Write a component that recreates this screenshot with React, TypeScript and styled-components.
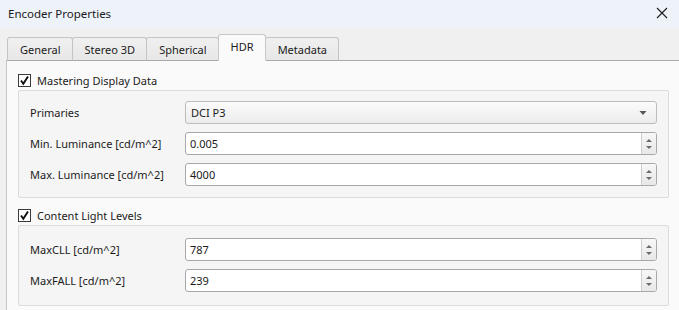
import styled, { createGlobalStyle } from "styled-components";

const GlobalStyle = createGlobalStyle`
  html, body {
    margin: 0;
    padding: 0;
    background: #fafafa;
  }
  body {
    font-family: "Noto Sans", "Segoe UI", sans-serif;
    font-size: 11px;
    color: #1b1b1b;
  }
`;

const tabs = ["General", "Stereo 3D", "Spherical", "HDR", "Metadata"];

export default function App() {
  return (
    <Window>
      <GlobalStyle />
      <TitleBar>
        <Title>Encoder Properties</Title>
        <CloseButton>
          <svg width="12" height="12" viewBox="0 0 12 12">
            <path d="M1 1 L11 11 M11 1 L1 11" stroke="#1b1b1b" strokeWidth="1.1" />
          </svg>
        </CloseButton>
      </TitleBar>
      <TabBar>
        {tabs.map((t) => (
          <Tab key={t} $active={t === "HDR"}>
            {t}
          </Tab>
        ))}
        <TabFill />
      </TabBar>
      <Panel>
        <CheckRow>
          <CheckBox />
          <span>Mastering Display Data</span>
        </CheckRow>
        <Group>
          <FieldRow>
            <Label>Primaries</Label>
            <Combo>
              <span>DCI P3</span>
              <DownArrow />
            </Combo>
          </FieldRow>
          <FieldRow>
            <Label>Min. Luminance [cd/m^2]</Label>
            <SpinBox value="0.005" />
          </FieldRow>
          <FieldRow>
            <Label>Max. Luminance [cd/m^2]</Label>
            <SpinBox value="4000" />
          </FieldRow>
        </Group>
        <CheckRow $second>
          <CheckBox />
          <span>Content Light Levels</span>
        </CheckRow>
        <Group $loose>
          <FieldRow>
            <Label>MaxCLL [cd/m^2]</Label>
            <SpinBox value="787" />
          </FieldRow>
          <FieldRow>
            <Label>MaxFALL [cd/m^2]</Label>
            <SpinBox value="239" />
          </FieldRow>
        </Group>
      </Panel>
    </Window>
  );
}

function CheckBox() {
  return (
    <Box>
      <svg width="11" height="11" viewBox="0 0 11 11">
        <path d="M2 5.5 L4.3 8.7 L9 1.5" stroke="#111" strokeWidth="1.9" fill="none" />
      </svg>
    </Box>
  );
}

function SpinBox({ value }: { value: string }) {
  return (
    <Spin>
      <SpinText>{value}</SpinText>
      <SpinButtons>
        <svg width="8" height="14" viewBox="0 0 8 14">
          <path d="M1 5 L4 2 L7 5 Z" fill="#6a6a6a" />
          <path d="M1 9 L4 12 L7 9 Z" fill="#6a6a6a" />
        </svg>
      </SpinButtons>
    </Spin>
  );
}

function DownArrow() {
  return (
    <svg width="8" height="6" viewBox="0 0 8 6">
      <path d="M0.5 1 L7.5 1 L4 5 Z" fill="#555" />
    </svg>
  );
}

const Window = styled.div`
  width: 679px;
  height: 310px;
  overflow: hidden;
  display: flex;
  flex-direction: column;
  background: #f0f0f0;
`;

const TitleBar = styled.div`
  height: 28px;
  flex: none;
  display: flex;
  align-items: center;
  justify-content: space-between;
  padding: 0 2px 2px 8px;
  box-sizing: border-box;
  background: #eef2f9;
`;

const Title = styled.div`
  font-size: 11.5px;
  color: #1b1b1b;
`;

const CloseButton = styled.div`
  width: 30px;
  height: 26px;
  display: flex;
  align-items: center;
  justify-content: center;
`;

const TabBar = styled.div`
  height: 33px;
  flex: none;
  display: flex;
  align-items: flex-end;
  padding-left: 7px;
  box-sizing: border-box;
`;

const Tab = styled.div<{ $active?: boolean }>`
  height: ${(p) => (p.$active ? 27 : 24)}px;
  box-sizing: border-box;
  padding: 0 11px 0 12px;
  margin-left: -1px;
  display: flex;
  align-items: center;
  justify-content: center;
  border: 1px solid ${(p) => (p.$active ? "#c8c8c8" : "#c4c4c4")};
  border-bottom: ${(p) => (p.$active ? "1px solid #fafafa" : "1px solid #a9a9a9")};
  border-radius: 3px 3px 0 0;
  background: ${(p) => (p.$active ? "#fafafa" : "linear-gradient(#f0f0f0, #e7e7e7)")};
  padding-bottom: ${(p) => (p.$active ? 3 : 0)}px;
  position: relative;
  z-index: ${(p) => (p.$active ? 1 : 0)};
  &:first-child {
    margin-left: 0;
  }
`;

const TabFill = styled.div`
  flex: 1;
  align-self: flex-end;
  border-bottom: 1px solid #a9a9a9;
`;

const Panel = styled.div`
  flex: 1;
  margin-left: 6px;
  margin-top: -1px;
  border-left: 1px solid #c4c4c4;
  border-top: 1px solid #a9a9a9;
  background: #fafafa;
  padding: 12px 10px 0 11px;
  display: flex;
  flex-direction: column;
`;

const CheckRow = styled.div<{ $second?: boolean }>`
  display: flex;
  align-items: center;
  gap: 6px;
  height: 14px;
  margin-top: ${(p) => (p.$second ? 10 : 0)}px;
  margin-bottom: 3px;
`;

const Box = styled.div`
  width: 11px;
  height: 11px;
  border: 1px solid #3a3a3a;
  background: #fff;
  display: flex;
  align-items: center;
  justify-content: center;
`;

const Group = styled.div<{ $loose?: boolean }>`
  border: 1px solid #dcdcdc;
  border-radius: 2px;
  background: #f5f5f5;
  padding: ${(p) => (p.$loose ? "12px 11px 13px" : "10px 11px 11px")};
  display: flex;
  flex-direction: column;
  gap: 8px;
`;

const FieldRow = styled.div`
  display: flex;
  align-items: center;
  height: 23px;
`;

const Label = styled.div`
  width: 155px;
  flex: none;
`;

const Combo = styled.div`
  flex: 1;
  height: 23px;
  box-sizing: border-box;
  border: 1px solid #bcbcbc;
  border-radius: 3px;
  background: linear-gradient(#fbfbfb, #ececec);
  display: flex;
  align-items: center;
  justify-content: space-between;
  padding: 0 9px 0 5px;
`;

const Spin = styled.div`
  flex: 1;
  height: 23px;
  box-sizing: border-box;
  border: 1px solid #a8a8a8;
  border-radius: 3px;
  background: #fff;
  display: flex;
  align-items: stretch;
  overflow: hidden;
`;

const SpinText = styled.div`
  flex: 1;
  display: flex;
  align-items: center;
  padding-left: 4px;
`;

const SpinButtons = styled.div`
  width: 14px;
  border-left: 1px solid #cfcfcf;
  background: linear-gradient(#f7f7f7, #e8e8e8);
  display: flex;
  align-items: center;
  justify-content: center;
`;
